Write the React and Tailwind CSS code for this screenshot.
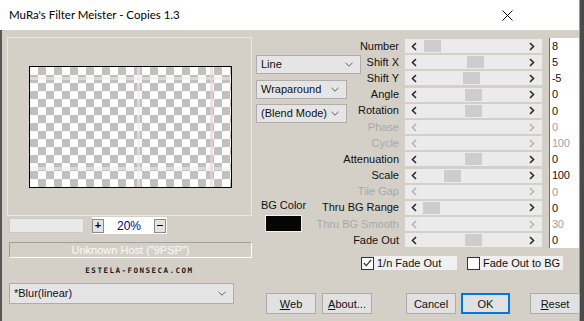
import React from "react";

const ROWS = [
  { label: "Number", value: "8", thumb: 19 },
  { label: "Shift X", value: "5", thumb: 62 },
  { label: "Shift Y", value: "-5", thumb: 58 },
  { label: "Angle", value: "0", thumb: 60 },
  { label: "Rotation", value: "0", thumb: 60 },
  { label: "Phase", value: "0", disabled: true },
  { label: "Cycle", value: "100", disabled: true },
  { label: "Attenuation", value: "0", thumb: 60 },
  { label: "Scale", value: "100", thumb: 39 },
  { label: "Tile Gap", value: "0", disabled: true },
  { label: "Thru BG Range", value: "0", thumb: 18 },
  { label: "Thru BG Smooth", value: "30", disabled: true },
  { label: "Fade Out", value: "0", thumb: 60 },
];

const Arrow = ({ dir, disabled }) => (
  <svg
    width="6"
    height="9"
    viewBox="0 0 6 9"
    className={disabled ? "text-[#b4b4b4]" : "text-[#2b2b2b]"}
  >
    <polyline
      points={dir === "left" ? "5,1 1.5,4.5 5,8" : "1,1 4.5,4.5 1,8"}
      fill="none"
      stroke="currentColor"
      strokeWidth="1.6"
    />
  </svg>
);

const DropChevron = () => (
  <svg width="8" height="5" viewBox="0 0 8 5" className="text-[#606060]">
    <polyline points="0.5,0.8 4,4.2 7.5,0.8" fill="none" stroke="currentColor" strokeWidth="1" />
  </svg>
);

const Select = ({ label, className }) => (
  <div
    className={`flex items-center justify-between whitespace-nowrap border border-[#adadad] bg-[#e5e5e5] pl-[4px] pr-[7px] text-[11px] text-[#111] ${className}`}
  >
    <span>{label}</span>
    <DropChevron />
  </div>
);

const Button = ({ children, className = "" }) => (
  <div
    className={`flex h-[21px] items-center justify-center bg-[#e1e1e1] text-[11px] text-[#111] ${className}`}
  >
    {children}
  </div>
);

const Checkbox = ({ checked, label, width }) => (
  <div className="flex items-center">
    <div className="flex h-[13px] w-[13px] items-center justify-center border border-[#333] bg-white">
      {checked && (
        <svg width="9" height="8" viewBox="0 0 9 8">
          <polyline points="0.8,4 3.3,6.6 8.2,0.8" fill="none" stroke="#333" strokeWidth="1.3" />
        </svg>
      )}
    </div>
    <div
      className={`flex h-[14px] items-center whitespace-nowrap bg-[#f0f0f0] pl-[3px] text-[11px] text-[#111] ${width}`}
    >
      {label}
    </div>
  </div>
);

const SliderRow = ({ row }) => (
  <div className="flex h-[16.2px] items-center">
    <div
      className={`flex w-[37px] justify-end whitespace-nowrap text-[11px] leading-none ${
        row.disabled ? "text-[#a8a8a8]" : "text-[#111]"
      }`}
    >
      {row.label}
    </div>
    <div className="ml-[6px] flex h-[14px] w-[137px] items-center bg-[#ebebeb]">
      <span className="ml-[6px] flex">
        <Arrow dir="left" disabled={row.disabled} />
      </span>
      {row.thumb != null && (
        <div className="h-[12px] w-[17px] bg-[#cdcdcd]" style={{ marginLeft: row.thumb - 12 }} />
      )}
      <div className="flex-1" />
      <span className="mr-[7px] flex">
        <Arrow dir="right" disabled={row.disabled} />
      </span>
    </div>
    <div
      className={`ml-[7px] flex h-full w-[30px] items-center border-l border-[#6f6f6f] bg-white pl-[2px] text-[11px] tracking-[-0.3px] ${
        row.disabled ? "text-[#a0a0a0]" : "text-[#111]"
      }`}
    >
      {row.value}
    </div>
  </div>
);

export default function App() {
  return (
    <div className="h-[321px] w-[584px] overflow-hidden bg-[#4d4a4a] font-['Liberation_Sans',Arial,sans-serif]">
      <div className="flex h-full w-[580px] flex-col border-r border-[#9a9a9a]">
        {/* Title bar */}
        <div className="flex h-[30px] items-center bg-white pl-[9px]">
          <span className="font-['Lato',sans-serif] text-[11.5px] text-black">
            MuRa's Filter Meister - Copies 1.3
          </span>
          <div className="ml-auto mr-[66px] flex">
            <svg width="11" height="11" viewBox="0 0 11 11">
              <path d="M0.5 0.5 L10.5 10.5 M10.5 0.5 L0.5 10.5" stroke="#111" strokeWidth="1" />
            </svg>
          </div>
        </div>

        {/* Body */}
        <div className="flex flex-1 border-l-2 border-[#5b5757] bg-[#d4d0c8]">
          {/* Left column */}
          <div className="flex w-[250px] flex-col">
            <div className="ml-[5px] mt-[7px] h-[179px] w-[245px] border border-[#e9e7e2]">
              <div className="relative ml-[21px] mt-[28px] h-[122px] w-[203px] border border-black bg-[repeating-conic-gradient(#c0c0c0_0%_25%,#ffffff_0%_50%)] bg-[length:16px_16px]">
                <div className="absolute left-0 right-0 top-[10px] h-[3px] bg-[#f2e6e6]/60" />
                <div className="absolute left-0 right-0 top-[100px] h-[3px] bg-[#f2e6e6]/60" />
                <div className="absolute bottom-0 top-0 left-[107px] w-[3px] bg-[#f2e6e6]/60" />
                <div className="absolute bottom-0 top-0 left-[180px] w-[3px] bg-[#e4d6d6]/70" />
              </div>
            </div>

            <div className="mt-[1px] flex items-start">
              <div className="ml-[7px] mt-[1px] h-[15px] w-[75px] border border-[#c9c9c9] bg-[#e9e9e9]" />
              <div className="ml-[8px] flex h-[17px] w-[75px] items-center bg-white">
                <div className="flex h-[14px] w-[12px] items-center justify-center border border-[#8a8a8a] bg-[#e3e3e3] text-[11px] font-bold leading-none">
                  +
                </div>
                <div className="flex-1 text-center text-[12px] text-[#000080]">20%</div>
                <div className="mr-[1px] flex h-[14px] w-[12px] items-center justify-center border border-[#8a8a8a] bg-[#e3e3e3]">
                  <div className="h-[1px] w-[6px] bg-black" />
                </div>
              </div>
            </div>

            <div className="ml-[7px] mt-[8px] flex h-[16px] w-[243px] items-center justify-center border-b border-l border-r border-t border-b-white border-l-[#a0a0a0] border-r-white border-t-[#a0a0a0] text-[11px] text-[#fafafa]">
              Unknown Host ("9PSP")
            </div>

            <div className="mt-[9px] pl-[25px] text-center font-['DejaVu_Sans_Mono',monospace] text-[7.5px] font-bold leading-[8px] tracking-[1.5px] text-[#1a1a1a]">
              ESTELA-FONSECA.COM
            </div>

            <Select label="*Blur(linear)" className="ml-[7px] mt-[8px] h-[21px] w-[225px]" />
          </div>

          {/* Right region */}
          <div className="flex flex-1 flex-col">
            <div className="flex">
              <div className="flex w-[110px] flex-col pl-[4px]">
                <Select label="Line" className="mt-[25px] h-[19px] w-[105px]" />
                <Select label="Wraparound" className="mt-[6px] h-[19px] w-[91px]" />
                <Select label="(Blend Mode)" className="mt-[5px] h-[19px] w-[91px]" />
                <div className="ml-[9px] mt-[76px] flex w-[37px] flex-col items-center">
                  <span className="whitespace-nowrap text-[11px] leading-[13px] text-[#111]">BG Color</span>
                  <div className="mt-[3px] h-[17px] w-[37px] border border-[#f2f2f2] bg-[#050505]" />
                </div>
              </div>
              <div className="mt-[8px] flex flex-col">
                {ROWS.map((row) => (
                  <SliderRow key={row.label} row={row} />
                ))}
              </div>
            </div>

            <div className="ml-[109px] mt-[8px] flex">
              <Checkbox checked label="1/n Fade Out" width="w-[83px]" />
              <div className="ml-[10px]">
                <Checkbox label="Fade Out to BG" width="w-[83px]" />
              </div>
            </div>

            <div className="ml-[14px] mt-[23px] flex">
              <Button className="w-[50px] border border-[#adadad]">
                <span className="underline">W</span>eb
              </Button>
              <Button className="ml-[6px] w-[50px] border border-[#adadad]">
                <span className="underline">A</span>bout...
              </Button>
              <Button className="ml-[34px] w-[50px] border border-[#adadad]">Cancel</Button>
              <Button className="ml-[5px] w-[49px] border-2 border-[#0078d7]">OK</Button>
              <Button className="ml-[20px] w-[50px] border border-[#adadad]">
                <span className="underline">R</span>eset
              </Button>
            </div>
          </div>
        </div>
      </div>
    </div>
  );
}
